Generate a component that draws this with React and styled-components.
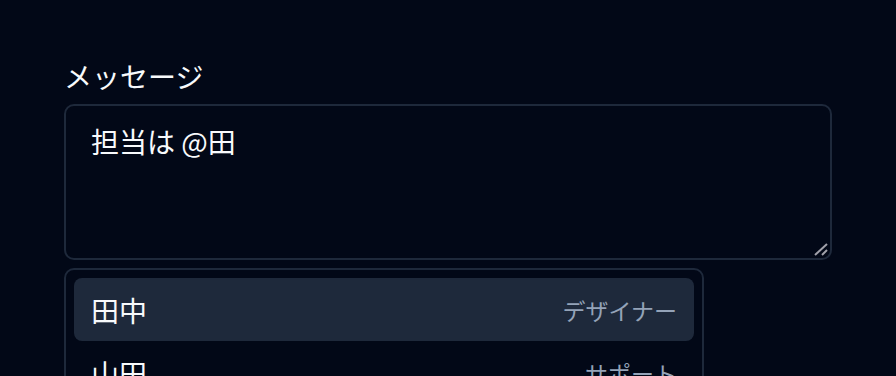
import React from "react";
import styled, { createGlobalStyle } from "styled-components";

const Global = createGlobalStyle`
  html, body { margin: 0; padding: 0; background: #020817; }
  body { font-family: "Noto Sans CJK JP", "Noto Sans", sans-serif; color: #f8fafc; }
`;

const Page = styled.div`
  padding: 56px 64px 0 64px;
  height: 376px;
  box-sizing: border-box;
  overflow: hidden;
  display: flex;
  flex-direction: column;
  & > * { flex-shrink: 0; }
`;

const Label = styled.label`
  font-size: 28px;
  line-height: 40px;
  color: #f8fafc;
  margin-bottom: 8px;
`;

const Field = styled.div`
  position: relative;
  width: 768px;
  height: 156px;
  box-sizing: border-box;
  border: 2px solid #1e293b;
  border-radius: 10px;
  padding: 15px 25px;
  font-size: 28px;
  line-height: 40px;
  color: #f8fafc;
`;

const Handle = styled.svg`
  position: absolute;
  right: 1px;
  bottom: 1px;
  width: 16px;
  height: 16px;
`;

const Menu = styled.ul`
  list-style: none;
  margin: 8px 0 0 0;
  width: 640px;
  box-sizing: border-box;
  border: 2px solid #1e293b;
  border-radius: 10px;
  padding: 8px;
  display: flex;
  flex-direction: column;
`;

const Item = styled.li`
  display: flex;
  align-items: center;
  justify-content: space-between;
  height: 63px;
  flex-shrink: 0;
  padding: 0 17px;
  border-radius: 8px;
  background: ${(p) => (p.$active ? "#1e293b" : "transparent")};
`;

const Name = styled.span`
  font-size: 28px;
  color: #f8fafc;
`;

const Role = styled.span`
  font-size: 23px;
  color: #94a3b8;
`;

const users = [
  { name: "田中", role: "デザイナー" },
  { name: "山田", role: "サポート" },
];

export default function App() {
  return (
    <>
      <Global />
      <Page>
        <Label>メッセージ</Label>
        <Field>
          担当は @田
          <Handle viewBox="0 0 16 16">
            <line x1="2" y1="14" x2="14" y2="3" stroke="#a1a1aa" strokeWidth="2" />
            <line x1="9" y1="14" x2="14" y2="9" stroke="#a1a1aa" strokeWidth="2" />
          </Handle>
        </Field>
        <Menu>
          {users.map((u, i) => (
            <Item key={u.name} $active={i === 0}>
              <Name>{u.name}</Name>
              <Role>{u.role}</Role>
            </Item>
          ))}
        </Menu>
      </Page>
    </>
  );
}
